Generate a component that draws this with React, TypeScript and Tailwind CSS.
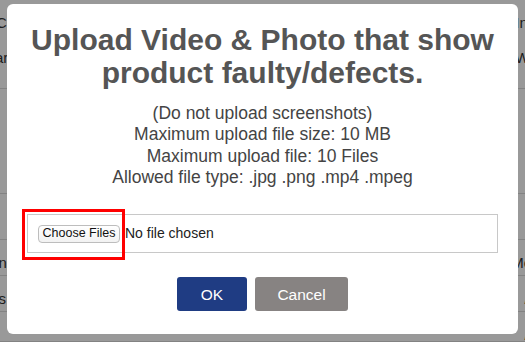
import React from "react";

const rows = [
  { h: "h-[89px]", left: ["AC1", "Var"], right: ["In", "Wv"] },
  { h: "h-[105px]", left: [], right: [] },
  { h: "h-[46px]", left: [], right: [] },
  { h: "h-[36px]", left: ["Ion"], right: ["Mor"] },
  { h: "h-[36px]", left: ["Ins"], right: ["//."] },
  { h: "h-[30px]", left: [], right: ["//."] },
];

function BackgroundPage() {
  return (
    <div className="flex flex-col bg-white text-[15px] text-[#333]">
      {rows.map((row, i) => (
        <div
          key={i}
          className={`${row.h} flex justify-between border-b border-[#dadada] ml-[-14px] mr-[-12px]`}
        >
          <div className="flex flex-col gap-[12px] pt-[12px]">
            {row.left.map((t) => (
              <span key={t}>{t}</span>
            ))}
          </div>
          <div className="flex flex-col gap-[12px] pt-[12px]">
            {row.right.map((t, j) => (
              <span key={j}>{t}</span>
            ))}
          </div>
        </div>
      ))}
    </div>
  );
}

export default function App() {
  return (
    <div
      className="relative h-[342px] w-[525px] overflow-hidden"
      style={{ fontFamily: '"Liberation Sans", Arial, sans-serif' }}
    >
      <BackgroundPage />
      <div className="absolute inset-0 bg-black/40" />
      <div className="absolute inset-0 flex justify-center pt-[4px]">
        <div className="flex h-[330px] w-[511px] flex-col items-center rounded-[6px] bg-white px-[20px] pt-[19px]">
          <h1 className="text-center text-[30px] font-bold leading-[33px] text-[#555]">
            Upload Video &amp; Photo that show
            <br />
            product faulty/defects.
          </h1>
          <div className="mt-[14px] text-center text-[17.5px] leading-[21.3px] text-[#444]">
            <p>(Do not upload screenshots)</p>
            <p>Maximum upload file size: 10 MB</p>
            <p>Maximum upload file: 10 Files</p>
            <p>Allowed file type: .jpg .png .mp4 .mpeg</p>
          </div>
          <div className="relative mt-[26px] flex h-[39px] w-full items-center border border-[#c8c8c8] pl-[10px]">
            <span className="flex h-[18px] w-[82px] items-center justify-center rounded-[4px] border border-[#bdbdbd] bg-gradient-to-b from-white to-[#f2f2f2] text-[12.5px] text-[#111]">
              Choose Files
            </span>
            <span className="ml-[5px] text-[14px] text-[#222]">No file chosen</span>
            <div className="absolute left-[-6px] top-[-6px] h-[51px] w-[103px] border-[3px] border-[#ff0000]" />
          </div>
          <div className="mt-[24px] flex gap-[8px]">
            <button className="h-[34px] w-[70px] rounded-[3px] bg-[#1f3c83] text-[15.5px] text-white">
              OK
            </button>
            <button className="h-[34px] w-[93px] rounded-[3px] bg-[#878382] text-[15.5px] text-white">
              Cancel
            </button>
          </div>
        </div>
      </div>
    </div>
  );
}
